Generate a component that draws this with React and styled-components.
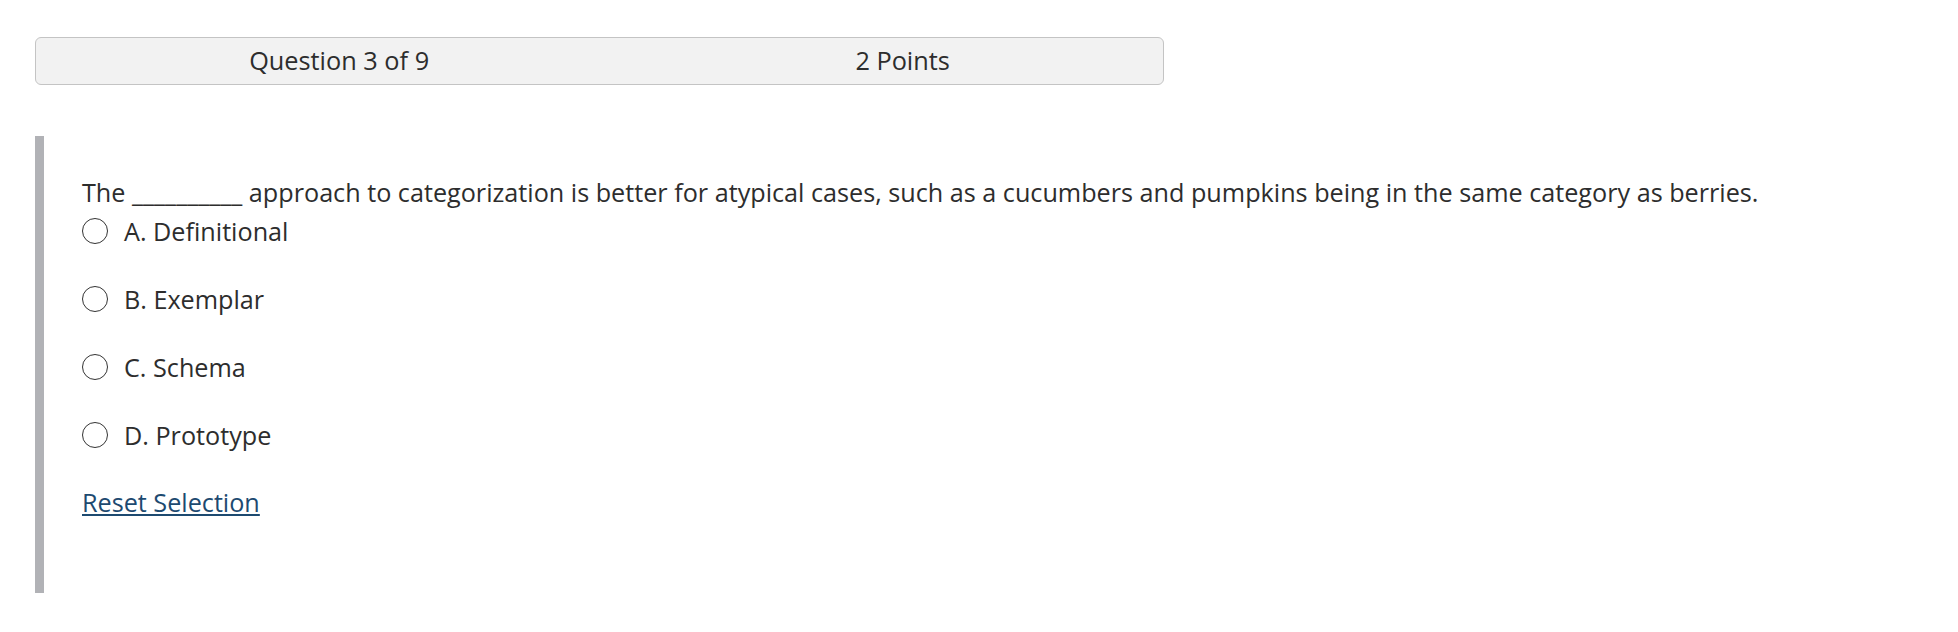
import React, { useState } from "react";
import styled, { createGlobalStyle } from "styled-components";

const GlobalStyle = createGlobalStyle`
  body {
    margin: 0;
    background: #ffffff;
    font-family: "Open Sans", "Noto Sans", sans-serif;
    color: #2d2d2d;
  }
`;

const options = [
  { id: "a", label: "A. Definitional" },
  { id: "b", label: "B. Exemplar" },
  { id: "c", label: "C. Schema" },
  { id: "d", label: "D. Prototype" },
];

export default function App() {
  const [selected, setSelected] = useState(null);

  return (
    <Page>
      <GlobalStyle />
      <QuestionHeader>
        <HeaderText>Question 3 of 9</HeaderText>
        <HeaderText>2 Points</HeaderText>
      </QuestionHeader>
      <QuestionBody>
        <QuestionText>
          The __________ approach to categorization is better for atypical
          cases, such as a cucumbers and pumpkins being in the same category
          as berries.
        </QuestionText>
        <OptionList>
          {options.map((opt) => (
            <OptionItem key={opt.id} onClick={() => setSelected(opt.id)}>
              <Radio checked={selected === opt.id} />
              <span>{opt.label}</span>
            </OptionItem>
          ))}
        </OptionList>
        <ResetLink href="#" onClick={(e) => { e.preventDefault(); setSelected(null); }}>
          Reset Selection
        </ResetLink>
      </QuestionBody>
    </Page>
  );
}

const Page = styled.div`
  padding: 37px 0 0 35px;
`;
const QuestionHeader = styled.div`
  box-sizing: border-box;
  width: 1129px;
  height: 48px;
  display: flex;
  align-items: center;
  justify-content: space-around;
  background: #f2f2f2;
  border: 1px solid #c4c4c4;
  border-radius: 6px;
  font-size: 25.3px;
  color: #2d2d2d;
`;
const HeaderText = styled.span`
  line-height: 1;
`;
const QuestionBody = styled.section`
  margin-top: 51px;
  box-sizing: border-box;
  height: 457px;
  border-left: 9px solid #b1b2b6;
  padding: 38px 0 0 38px;
  font-size: 25.2px;
`;
const QuestionText = styled.p`
  margin: 0 0 3px;
  line-height: 36px;
`;
const OptionList = styled.ul`
  list-style: none;
  margin: 0;
  padding: 0;
  display: flex;
  flex-direction: column;
  gap: 32px;
`;
const OptionItem = styled.li`
  display: flex;
  align-items: center;
  gap: 16px;
  line-height: 36px;
  cursor: pointer;
`;
const Radio = styled.span`
  box-sizing: border-box;
  width: 26px;
  height: 26px;
  border-radius: 50%;
  border: 1px solid #333;
  background: ${(p) => (p.checked ? "radial-gradient(#333 0 5px, #fff 6px)" : "#fff")};
`;
const ResetLink = styled.a`
  display: inline-block;
  margin-top: 31px;
  line-height: 36px;
  color: #1d4a70;
  text-decoration: underline;
`;
